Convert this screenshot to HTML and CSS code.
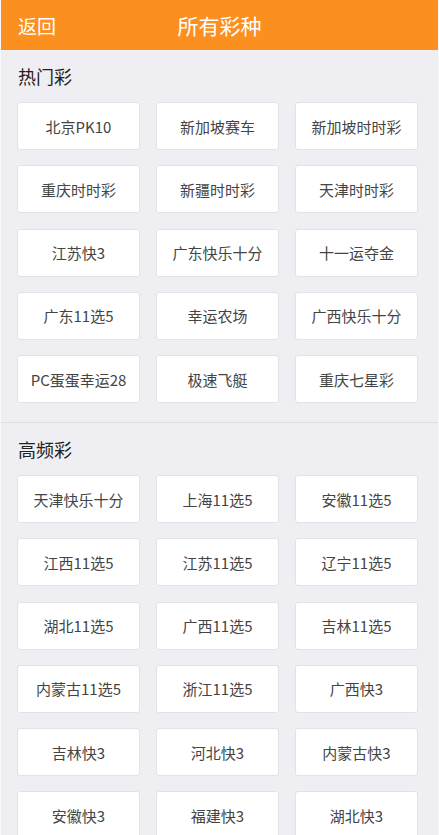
FILE: index.html
```html
<!DOCTYPE html>
<html lang="zh-CN">
<head>
    <meta charset="UTF-8">
    <meta name="viewport" content="width=device-width, initial-scale=1.0">
    <title>所有彩种</title>
    <link rel="stylesheet" href="styles.css">
</head>
<body>
    <div class="header">
        <a class="back" href="#">返回</a>
        <h1>所有彩种</h1>
    </div>

    <div class="section">
        <h2>热门彩</h2>
        <div class="grid">
            <a class="item" href="#">北京PK10</a>
            <a class="item" href="#">新加坡赛车</a>
            <a class="item" href="#">新加坡时时彩</a>
            <a class="item" href="#">重庆时时彩</a>
            <a class="item" href="#">新疆时时彩</a>
            <a class="item" href="#">天津时时彩</a>
            <a class="item" href="#">江苏快3</a>
            <a class="item" href="#">广东快乐十分</a>
            <a class="item" href="#">十一运夺金</a>
            <a class="item" href="#">广东11选5</a>
            <a class="item" href="#">幸运农场</a>
            <a class="item" href="#">广西快乐十分</a>
            <a class="item" href="#">PC蛋蛋幸运28</a>
            <a class="item" href="#">极速飞艇</a>
            <a class="item" href="#">重庆七星彩</a>
        </div>
    </div>

    <div class="section">
        <h2>高频彩</h2>
        <div class="grid">
            <a class="item" href="#">天津快乐十分</a>
            <a class="item" href="#">上海11选5</a>
            <a class="item" href="#">安徽11选5</a>
            <a class="item" href="#">江西11选5</a>
            <a class="item" href="#">江苏11选5</a>
            <a class="item" href="#">辽宁11选5</a>
            <a class="item" href="#">湖北11选5</a>
            <a class="item" href="#">广西11选5</a>
            <a class="item" href="#">吉林11选5</a>
            <a class="item" href="#">内蒙古11选5</a>
            <a class="item" href="#">浙江11选5</a>
            <a class="item" href="#">广西快3</a>
            <a class="item" href="#">吉林快3</a>
            <a class="item" href="#">河北快3</a>
            <a class="item" href="#">内蒙古快3</a>
            <a class="item" href="#">安徽快3</a>
            <a class="item" href="#">福建快3</a>
            <a class="item" href="#">湖北快3</a>
        </div>
    </div>
</body>
</html>
```

FILE: styles.css
```css
body {
    margin: 0;
    background-color: #efeff3;
    font-family: "Noto Sans CJK SC", "Noto Sans", sans-serif;
    color: #333;
    border-left: 1px solid #f8f8fa;
    border-right: 1px solid #f8f8fa;
    min-height: 835px;
}
.header {
    height: 50px;
    background-color: #fb8f1f;
    color: #fff;
    display: flex;
    align-items: center;
    position: relative;
}
.header .back {
    color: #fff;
    text-decoration: none;
    font-size: 19px;
    margin-left: 17px;
}
.header h1 {
    position: absolute;
    left: 0;
    right: 0;
    margin: 0;
    text-align: center;
    font-size: 21px;
    font-weight: normal;
    pointer-events: none;
}
.section {
    padding: 0 20px 19px 16px;
    border-bottom: 1px solid #dedee2;
}
.section:first-of-type {
    padding-top: 1px;
}
.section h2 {
    margin: 0;
    height: 52px;
    line-height: 52px;
    font-size: 18px;
    font-weight: normal;
    color: #222;
    padding-left: 1px;
}
.grid {
    display: grid;
    grid-template-columns: repeat(3, 123px);
    column-gap: 16px;
    row-gap: 15.25px;
}
.item {
    height: 48px;
    box-sizing: border-box;
    background-color: #fff;
    border: 1px solid #e2e2e6;
    border-radius: 3px;
    display: flex;
    align-items: center;
    justify-content: center;
    font-size: 15px;
    color: #444;
    text-decoration: none;
    white-space: nowrap;
}
```
